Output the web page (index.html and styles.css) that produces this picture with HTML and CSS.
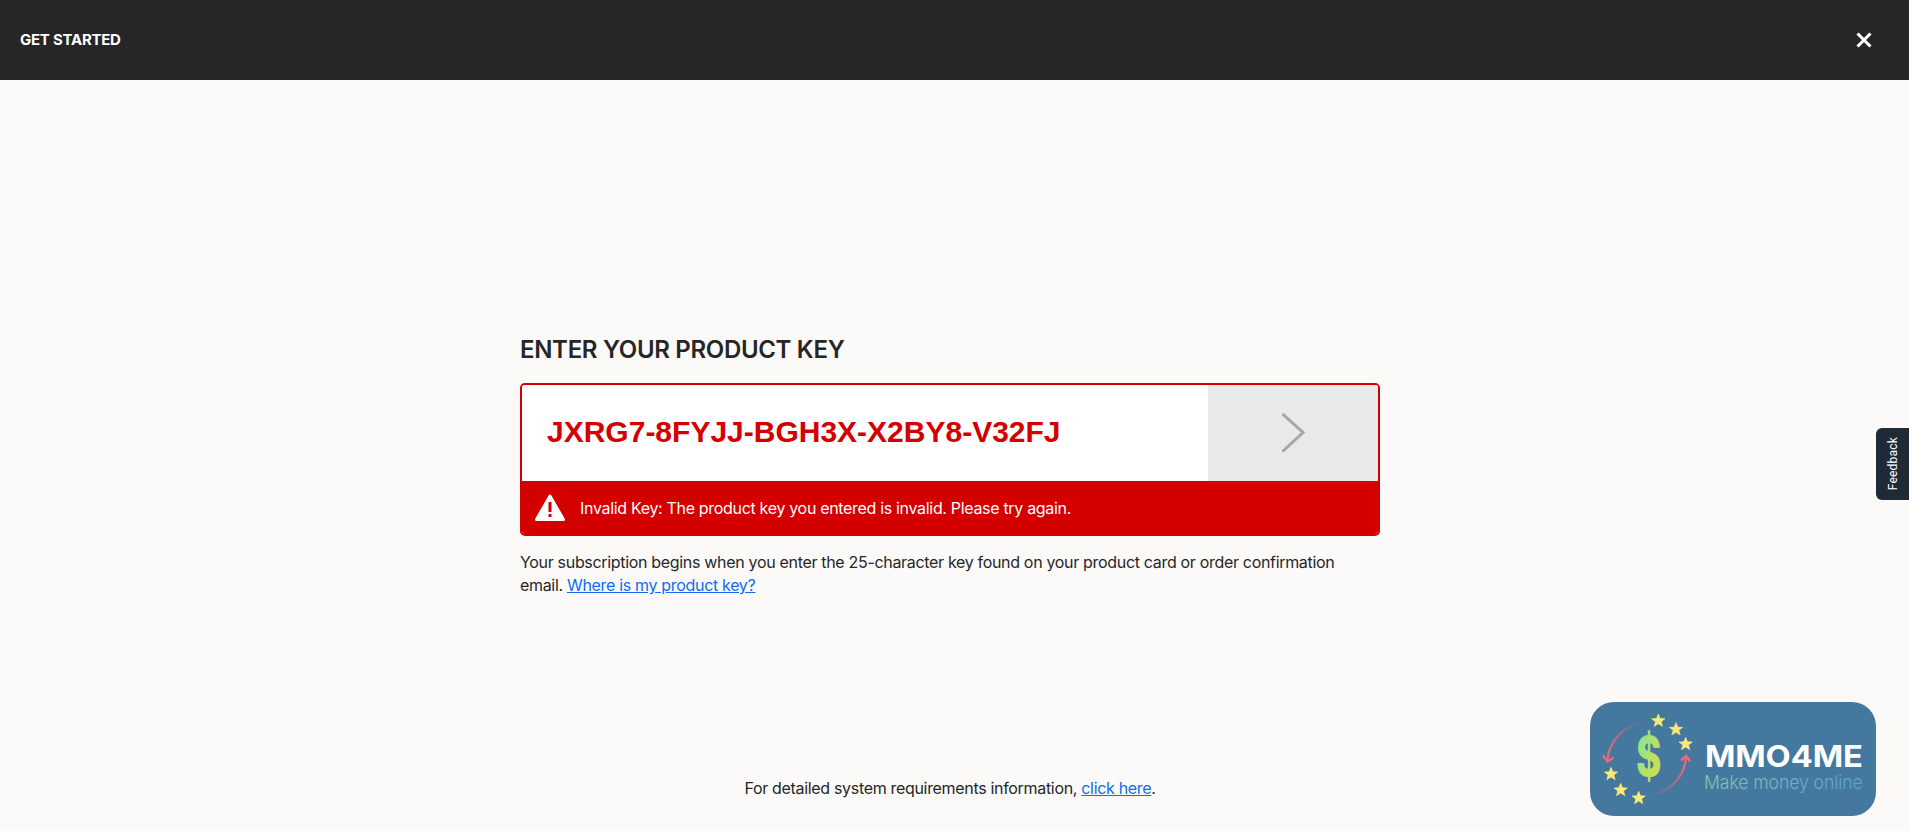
FILE: index.html
```html
<!DOCTYPE html>
<html lang="en">
<head>
    <meta charset="UTF-8">
    <title>Get Started</title>
    <link rel="stylesheet" href="styles.css">
</head>
<body>
    <header class="top-bar">
        <span class="top-title">GET STARTED</span>
        <svg class="close-icon" width="16" height="16" viewBox="0 0 16 16">
            <path d="M1.5 1.5L14.5 14.5M14.5 1.5L1.5 14.5" stroke="#fff" stroke-width="3" fill="none"/>
        </svg>
    </header>

    <main class="content">
        <div class="key-panel">
            <h1 class="key-title">ENTER YOUR PRODUCT KEY</h1>
            <div class="key-box">
                <div class="key-row">
                    <div class="key-value">JXRG7-8FYJJ-BGH3X-X2BY8-V32FJ</div>
                    <div class="key-submit">
                        <svg width="24" height="40" viewBox="0 0 24 40">
                            <path d="M1.5 1L22 19.5L1.5 38.500" stroke="#a6a6a6" stroke-width="3" fill="none"/>
                        </svg>
                    </div>
                </div>
                <div class="key-error">
                    <svg width="30" height="28" viewBox="0 0 30 28">
                        <path d="M15 2L28.500 25.500H1.500Z" fill="#fff" stroke="#fff" stroke-width="3" stroke-linejoin="round"/>
                        <rect x="13.500" y="8" width="3" height="10" fill="#d40000"/>
                        <rect x="13.500" y="20" width="3" height="3" fill="#d40000"/>
                    </svg>
                    <span>Invalid Key: The product key you entered is invalid. Please try again.</span>
                </div>
            </div>
            <p class="key-help">Your subscription begins when you enter the 25-character key found on your product card or order confirmation email. <a href="#">Where is my product key?</a></p>
        </div>
        <p class="requirements">For detailed system requirements information, <a href="#">click here</a>.</p>
    </main>

    <button class="feedback-tab" type="button"><span>Feedback</span></button>

    <svg class="logo" width="286" height="114" viewBox="0 0 858 342">
        <defs>
            <linearGradient id="dollar" x1="0" y1="0" x2="1" y2="1">
                <stop offset="0" stop-color="#7be6a6"/>
                <stop offset="1" stop-color="#e4dc36"/>
            </linearGradient>
            <linearGradient id="tagline" x1="0" y1="0" x2="1" y2="0">
                <stop offset="0" stop-color="#84c6a6"/>
                <stop offset="1" stop-color="#5f9fd6"/>
            </linearGradient>
            <linearGradient id="arrowLeft" x1="1" y1="0" x2="0" y2="1">
                <stop offset="0" stop-color="#ee6a78" stop-opacity="0"/>
                <stop offset="1" stop-color="#ee6a78"/>
            </linearGradient>
            <linearGradient id="arrowRight" x1="0" y1="1" x2="1" y2="0">
                <stop offset="0" stop-color="#ee6a78" stop-opacity="0"/>
                <stop offset="1" stop-color="#ee6a78"/>
            </linearGradient>
            <path id="star" d="M0 -20L5.500 -6.500L20 -6L8.500 3L12.500 17L0 9L-12.500 17L-8.500 3L-20 -6L-5.500 -6.500Z" fill="#fbe87a" stroke="#fbe87a" stroke-width="2" stroke-linejoin="round"/>
        </defs>
        <rect width="858" height="342" rx="72" fill="#45789f"/>
        <path d="M162 59C100 70 56 120 52 176" stroke="url(#arrowLeft)" stroke-width="7" fill="none"/>
        <path d="M38 160L53 179L71 166" stroke="#ee6a78" stroke-width="7" fill="none"/>
        <path d="M175 280C235 275 285 225 288 164" stroke="url(#arrowRight)" stroke-width="7" fill="none"/>
        <path d="M273 176L288 161L301 178" stroke="#ee6a78" stroke-width="7" fill="none"/>
        <use href="#star" x="205" y="56"/>
        <use href="#star" x="258" y="82"/>
        <use href="#star" x="287" y="126"/>
        <use href="#star" x="63" y="216"/>
        <use href="#star" x="92" y="264"/>
        <use href="#star" x="146" y="288"/>
        <text class="logo-dollar" x="138" y="222" textLength="76" lengthAdjust="spacingAndGlyphs" fill="url(#dollar)">$</text>
        <text class="logo-name" x="345" y="196" textLength="473" lengthAdjust="spacingAndGlyphs">MMO4ME</text>
        <text class="logo-tag" x="342" y="260" textLength="476" lengthAdjust="spacingAndGlyphs" fill="url(#tagline)">Make money online</text>
    </svg>
</body>
</html>
```

FILE: styles.css
```css
html, body {
    height: 100%;
}

body {
    margin: 0;
    background-color: #fcfaf8;
    color: #262626;
    font-family: Inter, Arial, sans-serif;
    font-size: 16px;
    letter-spacing: -0.32px;
    display: flex;
    flex-direction: column;
    overflow: hidden;
}

a {
    color: #0f6cf2;
}

.top-bar {
    height: 80px;
    flex-shrink: 0;
    box-sizing: border-box;
    background-color: #262626;
    display: flex;
    align-items: center;
    justify-content: space-between;
    padding: 0 37px 0 20px;
}

.top-title {
    color: white;
    font-size: 15px;
    font-weight: 700;
    letter-spacing: -0.25px;
    margin-bottom: 2px;
}

.content {
    flex: 1;
    display: flex;
    flex-direction: column;
    align-items: center;
    justify-content: space-between;
    padding: 255px 9px 31px 0;
}

.key-panel {
    width: 860px;
}

.key-title {
    margin: 0 0 18px;
    font-size: 24px;
    line-height: 30px;
    font-weight: 600;
}

.key-box {
    border: 2px solid #d40000;
    border-radius: 5px;
    overflow: hidden;
}

.key-row {
    height: 96px;
    background-color: white;
    display: flex;
}

.key-value {
    flex: 1;
    padding: 0 0 2px 25px;
    display: flex;
    align-items: center;
    color: #d40000;
    font-family: "Liberation Sans", Arial, sans-serif;
    font-size: 30px;
    font-weight: 700;
    letter-spacing: 0;
}

.key-submit {
    width: 170px;
    background-color: #e9e9e9;
    display: flex;
    align-items: center;
    justify-content: center;
    box-sizing: border-box;
}

.key-error {
    height: 53px;
    background-color: #d40000;
    color: white;
    display: flex;
    align-items: center;
    gap: 15px;
    padding-left: 13px;
}

.key-help {
    margin: 15px 0 0;
    line-height: 23px;
}

.requirements {
    margin: 0;
    line-height: 23px;
}

.feedback-tab {
    position: absolute;
    right: 0;
    top: 428px;
    width: 33px;
    height: 72px;
    padding: 0;
    border: none;
    border-radius: 6px 0 0 6px;
    background-color: #1f2a37;
    color: white;
    font-family: Roboto, Arial, sans-serif;
    font-size: 12px;
    letter-spacing: 0.2px;
    display: flex;
    align-items: center;
    justify-content: center;
}

.feedback-tab span {
    writing-mode: vertical-rl;
    transform: rotate(180deg);
}

.logo {
    position: absolute;
    left: 1590px;
    top: 702px;
}

.logo-dollar {
    font-family: Inter, Arial, sans-serif;
    font-size: 165px;
    font-weight: 800;
}

.logo-name {
    font-family: Inter, Arial, sans-serif;
    font-size: 90px;
    font-weight: 700;
    fill: white;
}

.logo-tag {
    font-family: Inter, Arial, sans-serif;
    font-size: 56px;
    font-weight: 300;
}
```
